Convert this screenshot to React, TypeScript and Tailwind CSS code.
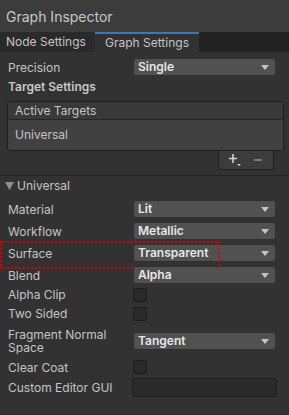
import React from "react";

function Arrow() {
  return (
    <svg width="8" height="5" viewBox="0 0 8 5" className="shrink-0">
      <path d="M0 0 L8 0 L4 5 Z" fill="#c4c4c4" />
    </svg>
  );
}

function Dropdown({ value }: { value: string }) {
  return (
    <div className="flex items-center justify-between w-[143px] h-[18px] bg-[#515151] border border-[#303030] rounded-[3px] pl-[4px] pr-[6px]">
      <span className="text-[12px] font-semibold text-[#e6e6e6] leading-none">{value}</span>
      <Arrow />
    </div>
  );
}

function Checkbox() {
  return <div className="w-[14px] h-[14px] bg-[#2a2a2a] border border-[#1c1c1c] rounded-[2px]" />;
}

function Row({ label, children, h = "h-[18px]", extra = "" }: { label: string; children: React.ReactNode; h?: string; extra?: string }) {
  return (
    <div className={`relative flex items-center pl-[8px] ${h} ${extra}`}>
      <div className="w-[125px] shrink-0 text-[12px] leading-[13px] text-[#c4c4c4]">{label}</div>
      {children}
    </div>
  );
}

export default function App() {
  return (
    <div className="w-[289px] h-[415px] overflow-hidden bg-[#323232] font-['Inter','Liberation_Sans',sans-serif]">
      {/* Header */}
      <div className="h-[32px] bg-[#3c3c3c] flex items-center px-[6px] text-[14px] text-[#c8c8c8]">Graph Inspector</div>

      {/* Tabs */}
      <div className="h-[20px] bg-[#232323] flex text-[12px] text-[#c4c4c4]">
        <div className="w-[95px] bg-[#2a2a2a] flex items-center pl-[6px]">Node Settings</div>
        <div className="w-[104px] bg-[#323232] border-t-2 border-[#3a79bb] flex items-center pl-[10px]">Graph Settings</div>
      </div>

      {/* Content */}
      <div className="pt-[6px]">
        <Row label="Precision">
          <Dropdown value="Single" />
        </Row>
        <div className="h-[18px] mt-[2px] pl-[8px] flex items-center text-[12px] font-semibold text-[#c8c8c8]">Target Settings</div>

        {/* Active targets list */}
        <div className="mt-[5px] ml-[7px] w-[277px] border border-[#1e1e1e] rounded-[3px] overflow-hidden">
          <div className="h-[18px] bg-[#393939] border-b border-[#262626] flex items-center pl-[7px] text-[12px] text-[#c4c4c4]">Active Targets</div>
          <div className="h-[30px] bg-[#414141] flex items-center pl-[7px] text-[12px] text-[#c4c4c4]">Universal</div>
        </div>
        <div className="flex justify-end pr-[15px]">
          <div className="w-[56px] h-[19px] bg-[#3c3c3c] border border-t-0 border-[#1e1e1e] rounded-b-[3px] flex items-center pl-[10px] gap-[12px]">
            <svg width="12" height="12" viewBox="0 0 12 12">
              <path d="M4 0 V9 M0 4.5 H8" stroke="#d0d0d0" strokeWidth="1.6" />
              <path d="M8 10 H12 L10 12 Z" fill="#d0d0d0" />
            </svg>
            <svg width="10" height="10" viewBox="0 0 10 10">
              <path d="M1 5 H9" stroke="#8a8a8a" strokeWidth="1.6" />
            </svg>
          </div>
        </div>

        {/* Foldout */}
        <div className="mt-[5px] border-t border-[#232323] h-[20px] flex items-center pl-[5px] text-[12px] text-[#c4c4c4]">
          <svg width="9" height="8" viewBox="0 0 9 8" className="mr-[3px]">
            <path d="M0 0 L9 0 L4.5 8 Z" fill="#8e8e8e" />
          </svg>
          Universal
        </div>

        <div className="mt-[5px]">
          <Row label="Material">
            <Dropdown value="Lit" />
          </Row>
          <Row label="Workflow" extra="mt-[4px]">
            <Dropdown value="Metallic" />
          </Row>
          <Row label="Surface" extra="mt-[4px]">
            <Dropdown value="Transparent" />
            <div className="absolute left-0 top-[-3px] w-[220px] h-[28px] border-2 border-dotted border-[#e00000]" />
          </Row>
          <Row label="Blend" extra="mt-[4px]">
            <Dropdown value="Alpha" />
          </Row>
          <Row label="Alpha Clip" h="h-[19px]" extra="mt-[1px]">
            <Checkbox />
          </Row>
          <Row label="Two Sided" h="h-[19px]">
            <Checkbox />
          </Row>
          <Row label="Fragment Normal Space" h="h-[32px]" extra="mt-[2px]">
            <Dropdown value="Tangent" />
          </Row>
          <Row label="Clear Coat" h="h-[20px]">
            <Checkbox />
          </Row>
          <Row label="Custom Editor GUI" h="h-[19px]" extra="mt-[1px]">
            <div className="w-[145px] h-[19px] -ml-[1px] bg-[#2a2a2a] border border-[#1e1e1e] rounded-[3px]" />
          </Row>
        </div>
      </div>
    </div>
  );
}
